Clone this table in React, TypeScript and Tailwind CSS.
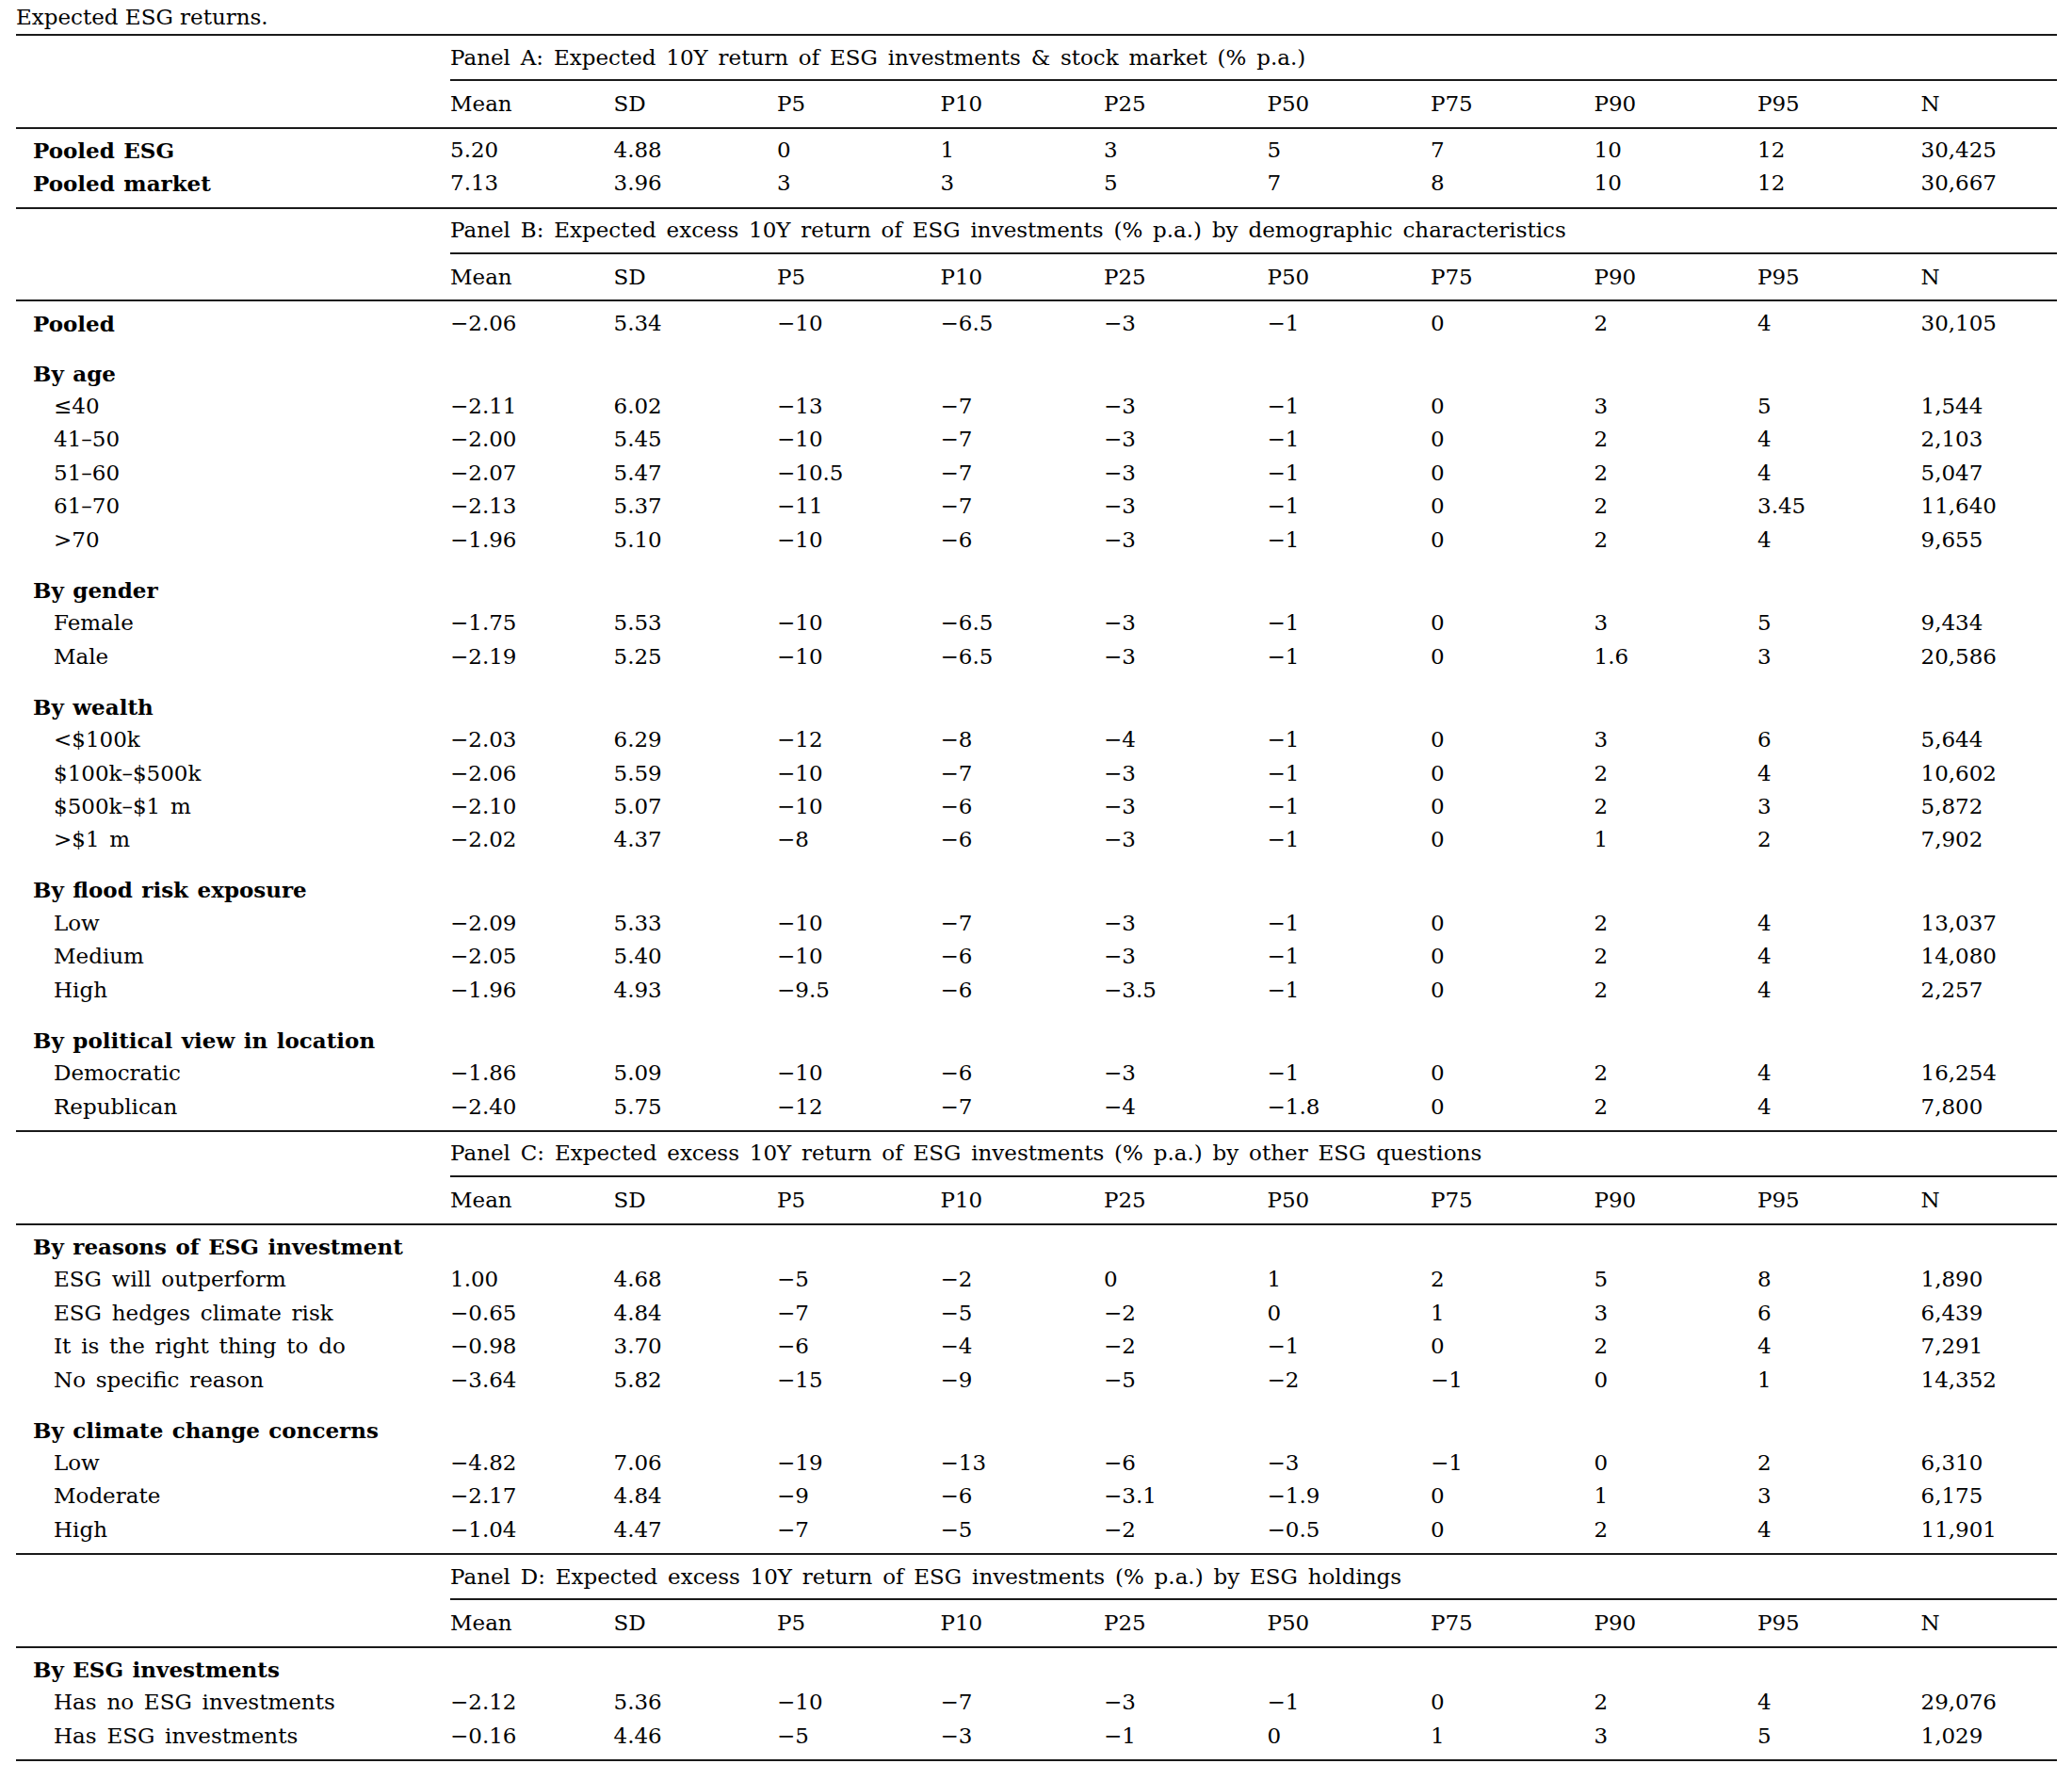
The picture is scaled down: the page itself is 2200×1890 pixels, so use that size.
import React from "react";

type Row =
  | { kind: "data"; label: string; bold?: boolean; indent?: boolean; vals: string[] }
  | { kind: "group"; label: string };

type Panel = { title: string; rows: Row[] };

const M = "\u2212";

const d = (label: string, vals: string, opts: { bold?: boolean; indent?: boolean } = { indent: true }): Row => ({
  kind: "data",
  label,
  bold: opts.bold,
  indent: opts.indent,
  vals: vals.split(" ").map((v) => v.replace(/^-/, M)),
});
const g = (label: string): Row => ({ kind: "group", label });

const panels: Panel[] = [
  {
    title: "Panel A: Expected 10Y return of ESG investments & stock market (% p.a.)",
    rows: [
      d("Pooled ESG", "5.20 4.88 0 1 3 5 7 10 12 30,425", { bold: true }),
      d("Pooled market", "7.13 3.96 3 3 5 7 8 10 12 30,667", { bold: true }),
    ],
  },
  {
    title: "Panel B: Expected excess 10Y return of ESG investments (% p.a.) by demographic characteristics",
    rows: [
      d("Pooled", "-2.06 5.34 -10 -6.5 -3 -1 0 2 4 30,105", { bold: true }),
      g("By age"),
      d("\u226440", "-2.11 6.02 -13 -7 -3 -1 0 3 5 1,544"),
      d("41\u201350", "-2.00 5.45 -10 -7 -3 -1 0 2 4 2,103"),
      d("51\u201360", "-2.07 5.47 -10.5 -7 -3 -1 0 2 4 5,047"),
      d("61\u201370", "-2.13 5.37 -11 -7 -3 -1 0 2 3.45 11,640"),
      d(">70", "-1.96 5.10 -10 -6 -3 -1 0 2 4 9,655"),
      g("By gender"),
      d("Female", "-1.75 5.53 -10 -6.5 -3 -1 0 3 5 9,434"),
      d("Male", "-2.19 5.25 -10 -6.5 -3 -1 0 1.6 3 20,586"),
      g("By wealth"),
      d("<$100k", "-2.03 6.29 -12 -8 -4 -1 0 3 6 5,644"),
      d("$100k\u2013$500k", "-2.06 5.59 -10 -7 -3 -1 0 2 4 10,602"),
      d("$500k\u2013$1 m", "-2.10 5.07 -10 -6 -3 -1 0 2 3 5,872"),
      d(">$1 m", "-2.02 4.37 -8 -6 -3 -1 0 1 2 7,902"),
      g("By flood risk exposure"),
      d("Low", "-2.09 5.33 -10 -7 -3 -1 0 2 4 13,037"),
      d("Medium", "-2.05 5.40 -10 -6 -3 -1 0 2 4 14,080"),
      d("High", "-1.96 4.93 -9.5 -6 -3.5 -1 0 2 4 2,257"),
      g("By political view in location"),
      d("Democratic", "-1.86 5.09 -10 -6 -3 -1 0 2 4 16,254"),
      d("Republican", "-2.40 5.75 -12 -7 -4 -1.8 0 2 4 7,800"),
    ],
  },
  {
    title: "Panel C: Expected excess 10Y return of ESG investments (% p.a.) by other ESG questions",
    rows: [
      g("By reasons of ESG investment"),
      d("ESG will outperform", "1.00 4.68 -5 -2 0 1 2 5 8 1,890"),
      d("ESG hedges climate risk", "-0.65 4.84 -7 -5 -2 0 1 3 6 6,439"),
      d("It is the right thing to do", "-0.98 3.70 -6 -4 -2 -1 0 2 4 7,291"),
      d("No specific reason", "-3.64 5.82 -15 -9 -5 -2 -1 0 1 14,352"),
      g("By climate change concerns"),
      d("Low", "-4.82 7.06 -19 -13 -6 -3 -1 0 2 6,310"),
      d("Moderate", "-2.17 4.84 -9 -6 -3.1 -1.9 0 1 3 6,175"),
      d("High", "-1.04 4.47 -7 -5 -2 -0.5 0 2 4 11,901"),
    ],
  },
  {
    title: "Panel D: Expected excess 10Y return of ESG investments (% p.a.) by ESG holdings",
    rows: [
      g("By ESG investments"),
      d("Has no ESG investments", "-2.12 5.36 -10 -7 -3 -1 0 2 4 29,076"),
      d("Has ESG investments", "-0.16 4.46 -5 -3 -1 0 1 3 5 1,029"),
    ],
  },
];

const headers = ["Mean", "SD", "P5", "P10", "P25", "P50", "P75", "P90", "P95", "N"];

const GRID = "grid grid-cols-[461px_repeat(9,173.5px)_1fr]";

function PanelBlock({ panel }: { panel: Panel }) {
  return (
    <div className="border-t-2 border-[#1a1a1a]">
      <div className={GRID}>
        <div />
        <div className="col-span-10 h-[48px] flex items-center border-b-2 border-[#1a1a1a] whitespace-nowrap">
          {panel.title}
        </div>
      </div>
      <div className={`${GRID} h-[50.75px] items-center border-b-2 border-[#1a1a1a]`}>
        <div />
        {headers.map((h) => (
          <div key={h}>{h}</div>
        ))}
      </div>
      <div className="pt-[5px] pb-[7px]">
        {panel.rows.map((r, i) => {
          if (r.kind === "group") {
            return (
              <div
                key={i}
                className={`${GRID} ${i === 0 ? "h-[35.45px]" : "h-[53px] pt-[17.55px]"} items-center`}
              >
                <div className="pl-[18px] font-bold whitespace-nowrap [word-spacing:1.5px]">{r.label}</div>
              </div>
            );
          }
          return (
            <div key={i} className={`${GRID} h-[35.45px] items-center`}>
              <div
                className={`${r.indent ? "pl-[40px]" : "pl-[18px]"} ${
                  r.bold ? "font-bold [word-spacing:1.5px]" : ""
                } whitespace-nowrap`}
              >
                {r.label}
              </div>
              {r.vals.map((v, j) => (
                <div key={j} className="whitespace-nowrap">
                  {v}
                </div>
              ))}
            </div>
          );
        })}
      </div>
    </div>
  );
}

export default function App() {
  return (
    <div className="w-[2200px] h-[1890px] overflow-hidden bg-white text-black text-[23px] leading-none font-['DejaVu_Serif',serif]">
      <div className="pl-[17px] pr-[16px]">
        <div className="h-[36px] flex items-center">Expected ESG returns.</div>
        <div className="[word-spacing:3.5px]">
          {panels.map((p, i) => (
            <PanelBlock key={i} panel={p} />
          ))}
          <div className="border-t-2 border-[#1a1a1a]" />
        </div>
      </div>
    </div>
  );
}
